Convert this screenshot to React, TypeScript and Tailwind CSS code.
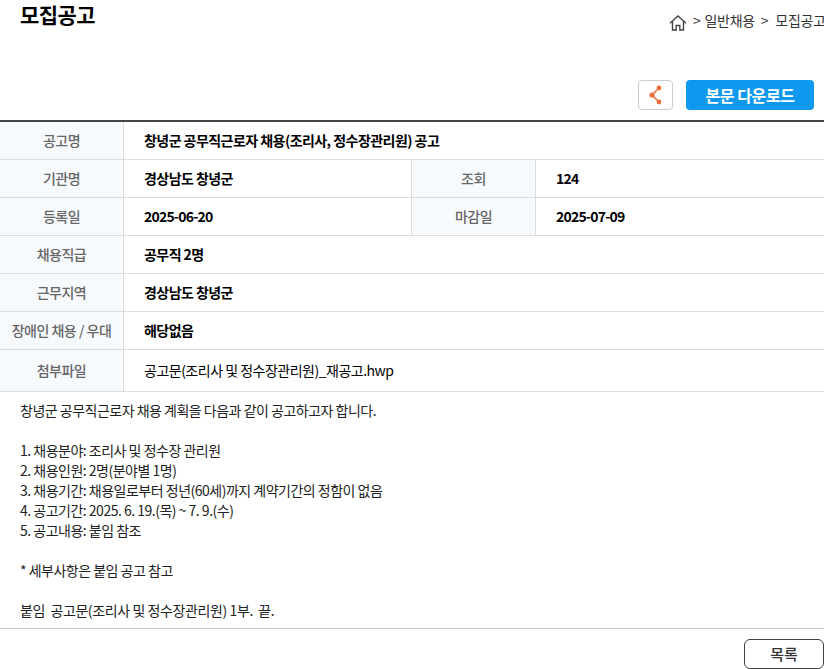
const font = "font-['Noto_Sans_CJK_KR','Noto_Sans',sans-serif]";

function Th({ children, className = "" }: { children: React.ReactNode; className?: string }) {
  return (
    <div className={`flex items-center justify-center bg-[#f7fafd] text-[14px] font-medium text-[#666] tracking-[-0.5px] ${className}`}>
      {children}
    </div>
  );
}

function Td({ children, className = "" }: { children: React.ReactNode; className?: string }) {
  return (
    <div className={`flex items-center pl-5 text-[14px] font-bold text-black tracking-[-0.55px] ${className}`}>
      {children}
    </div>
  );
}

function Row({ children, h = "h-[38px]" }: { children: React.ReactNode; h?: string }) {
  return <div className={`flex border-b border-[#dcdcdc] ${h}`}>{children}</div>;
}

export default function App() {
  return (
    <div className={`${font} w-[824px] h-[669px] overflow-hidden bg-white`}>
      <div className="flex h-[80px] justify-between pl-5">
        <h2 className="text-[21px] font-bold leading-[28px] text-black tracking-[-0.55px]">모집공고</h2>
        <div className="mt-[10px] flex h-[24px] w-[155px] shrink-0 items-start overflow-hidden whitespace-nowrap text-[14px] leading-[20px] text-[#333] tracking-[-0.3px]">
          <svg className="mr-[6px] mt-[5px] shrink-0" width="18" height="16" viewBox="0 0 18 16" fill="none" stroke="#444" strokeWidth="1.4">
            <path d="M1 8.2 9 1l8 7.2" />
            <path d="M3.5 6.5V15h3.7v-4.5h3.6V15h3.7V6.5" />
          </svg>
          <span>&gt;</span>
          <span className="ml-[4px]">일반채용</span>
          <span className="ml-[6px]">&gt;</span>
          <span className="ml-[7px]">모집공고</span>
        </div>
      </div>
      <div className="flex h-[30px] items-center justify-end gap-[13px] pr-[10px]">
        <button className="flex h-[30px] w-[35px] items-center justify-center rounded-[4px] border border-[#ccc] bg-white">
          <svg width="14" height="20" viewBox="0 0 14 20" fill="#ee6f3a" stroke="#ee6f3a">
            <path d="M10 3 3 10l7 7" fill="none" strokeWidth="1.5" />
            <circle cx="10" cy="3" r="2.4" strokeWidth="0" />
            <circle cx="3" cy="10" r="2.6" strokeWidth="0" />
            <circle cx="10" cy="17" r="2.4" strokeWidth="0" />
          </svg>
        </button>
        <button className="h-[30px] w-[128px] rounded-[4px] bg-[#0f99ee] text-[16px] font-bold tracking-[-0.4px] text-white">본문 다운로드</button>
      </div>
      <div className="mt-[10px] border-t-2 border-[#444]">
        <Row>
          <Th className="w-[124px] border-r border-[#dcdcdc]">공고명</Th>
          <Td className="flex-1">창녕군 공무직근로자 채용(조리사, 정수장관리원) 공고</Td>
        </Row>
        <Row>
          <Th className="w-[124px] border-r border-[#dcdcdc]">기관명</Th>
          <Td className="w-[288px] border-r border-[#dcdcdc]">경상남도 창녕군</Td>
          <Th className="w-[124px] border-r border-[#dcdcdc]">조회</Th>
          <Td className="flex-1 !tracking-[-0.8px]">124</Td>
        </Row>
        <Row>
          <Th className="w-[124px] border-r border-[#dcdcdc]">등록일</Th>
          <Td className="w-[288px] border-r border-[#dcdcdc] !tracking-[-0.8px]">2025-06-20</Td>
          <Th className="w-[124px] border-r border-[#dcdcdc]">마감일</Th>
          <Td className="flex-1 !tracking-[-0.8px]">2025-07-09</Td>
        </Row>
        <Row>
          <Th className="w-[124px] border-r border-[#dcdcdc]">채용직급</Th>
          <Td className="flex-1">공무직 2명</Td>
        </Row>
        <Row>
          <Th className="w-[124px] border-r border-[#dcdcdc]">근무지역</Th>
          <Td className="flex-1">경상남도 창녕군</Td>
        </Row>
        <Row>
          <Th className="w-[124px] border-r border-[#dcdcdc]">장애인 채용 / 우대</Th>
          <Td className="flex-1">해당없음</Td>
        </Row>
        <Row h="h-[42px]">
          <Th className="w-[124px] border-r border-[#dcdcdc]">첨부파일</Th>
          <Td className="flex-1 !font-normal text-[#333] !tracking-[-0.5px]">공고문(조리사 및 정수장관리원)_재공고.hwp</Td>
        </Row>
      </div>
      <div className="h-[237px] whitespace-pre-wrap border-b border-[#c8c8c8] pl-5 pt-[8px] text-[14px] leading-[20px] text-[#222] tracking-[-0.5px]">
        {`창녕군 공무직근로자 채용 계획을 다음과 같이 공고하고자 합니다.

1. 채용분야: 조리사 및 정수장 관리원
2. 채용인원: 2명(분야별 1명)
3. 채용기간: 채용일로부터 정년(60세)까지 계약기간의 정함이 없음
4. 공고기간: 2025. 6. 19.(목) ~ 7. 9.(수)
5. 공고내용: 붙임 참조

* 세부사항은 붙임 공고 참고

`}
        <span className="tracking-[-0.4px]">붙임&nbsp;&nbsp;공고문(조리사 및 정수장관리원) 1부.&nbsp;&nbsp;끝.</span>
      </div>
      <div className="flex justify-end pt-[10px]">
        <button className="h-[30px] w-[80px] rounded-[6px] border border-[#444] bg-white text-[15px] font-medium text-[#333]">목록</button>
      </div>
    </div>
  );
}
